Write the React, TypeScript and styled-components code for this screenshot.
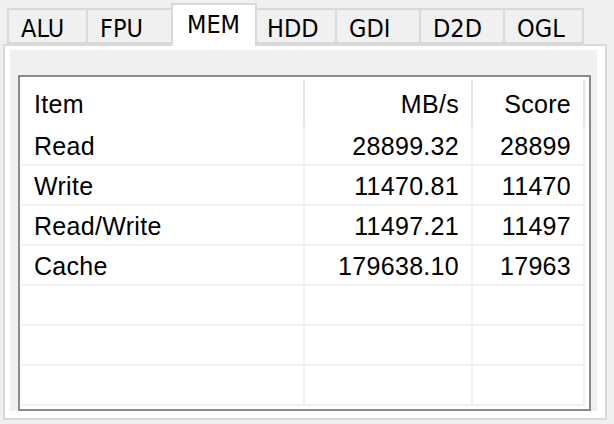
import styled, { createGlobalStyle } from 'styled-components';

const GlobalStyle = createGlobalStyle`
	html, body {
		margin: 0;
		padding: 0;
		background: #f0f0f0;
		overflow: hidden;
	}
`;

const tabs = [
	{ label: 'ALU', width: 81 },
	{ label: 'FPU', width: 85 },
	{ label: 'MEM', width: 86 },
	{ label: 'HDD', width: 82 },
	{ label: 'GDI', width: 84 },
	{ label: 'D2D', width: 84 },
	{ label: 'OGL', width: 79 },
];

const rows = [
	{ item: 'Read', speed: '28899.32', score: '28899' },
	{ item: 'Write', speed: '11470.81', score: '11470' },
	{ item: 'Read/Write', speed: '11497.21', score: '11497' },
	{ item: 'Cache', speed: '179638.10', score: '17963' },
	{ item: '', speed: '', score: '' },
	{ item: '', speed: '', score: '' },
	{ item: '', speed: '', score: '' },
];

export default function App() {
	return (
		<>
			<GlobalStyle />
			<Window>
				<TabStrip>
					{tabs.map(tab => (
						<Tab key={tab.label} $width={tab.width} $active={tab.label === 'MEM'}>
							{tab.label}
						</Tab>
					))}
				</TabStrip>
				<Panel>
					<Page>
						<ListView>
							<HeaderRow>
								<HeaderCell>Item</HeaderCell>
								<HeaderCell $right>MB/s</HeaderCell>
								<HeaderCell $right>Score</HeaderCell>
							</HeaderRow>
							{rows.map((row, i) => (
								<Row key={i}>
									<Cell>{row.item}</Cell>
									<Cell $right>{row.speed}</Cell>
									<Cell $right>{row.score}</Cell>
								</Row>
							))}
						</ListView>
					</Page>
				</Panel>
			</Window>
		</>
	);
}

const Window = styled.div`
	width: 614px;
	height: 424px;
	padding-top: 3px;
	box-sizing: border-box;
	font-family: Tahoma, 'DejaVu Sans Condensed', 'DejaVu Sans', sans-serif;
	color: #000;
`;

const TabStrip = styled.div`
	display: flex;
	align-items: flex-end;
	height: 41px;
	padding-left: 7px;
	position: relative;
	z-index: 1;
`;

const Tab = styled.div<{ $width: number; $active?: boolean }>`
	box-sizing: border-box;
	width: ${p => p.$width}px;
	height: ${p => (p.$active ? 43 : 36)}px;
	margin: ${p => (p.$active ? '0 -2px -2px -2px' : '0')};
	padding-left: ${p => (p.$active ? 14 : 12)}px;
	padding-top: ${p => (p.$active ? 6 : 5)}px;
	border: 2px solid #d9d9d9;
	border-bottom: ${p => (p.$active ? 'none' : '2px solid #d9d9d9')};
	border-left-width: ${p => (p.$active ? 2 : 0)}px;
	background: ${p => (p.$active ? '#fff' : '#f0f0f0')};
	font-size: 25px;
	line-height: 28px;
	white-space: nowrap;
	position: relative;
	z-index: ${p => (p.$active ? 2 : 1)};
	&:first-child {
		border-left-width: 2px;
	}
`;

const Panel = styled.div`
	box-sizing: border-box;
	width: 604px;
	height: 376px;
	margin-left: 3px;
	border: 2px solid #d9d9d9;
	background: #fff;
	padding: 4px 8px 7px 5px;
	display: flex;
`;

const Page = styled.div`
	flex: 1;
	background: #f0f0f0;
	padding: 25px 6px 0 8px;
	display: flex;
`;

const ListView = styled.div`
	flex: 1;
	border: 2px solid #858a93;
	background: #fff;
	padding-left: 2px;
	font-family: 'Liberation Sans', Arial, sans-serif;
	font-size: 25px;
	letter-spacing: 0.3px;
`;

const HeaderRow = styled.div`
	display: grid;
	grid-template-columns: 283px 168px 112px;
	height: 49px;
	padding-top: 3px;
	box-sizing: border-box;
`;

const HeaderCell = styled.div<{ $right?: boolean }>`
	border-right: 2px solid #e5e5e5;
	display: flex;
	align-items: center;
	justify-content: ${p => (p.$right ? 'flex-end' : 'flex-start')};
	padding: ${p => (p.$right ? '0 12px 0 0' : '0 0 0 12px')};
	padding-top: 2px;
`;

const Row = styled.div`
	display: grid;
	grid-template-columns: 283px 168px 112px;
	height: 40px;
	width: 563px;
	box-sizing: border-box;
	border-bottom: 2px solid #f0f0f0;
`;

const Cell = styled.div<{ $right?: boolean }>`
	border-right: 2px solid #f0f0f0;
	display: flex;
	align-items: center;
	justify-content: ${p => (p.$right ? 'flex-end' : 'flex-start')};
	padding: ${p => (p.$right ? '0 12px 0 0' : '0 0 0 12px')};
	padding-top: 2px;
	white-space: nowrap;
`;
